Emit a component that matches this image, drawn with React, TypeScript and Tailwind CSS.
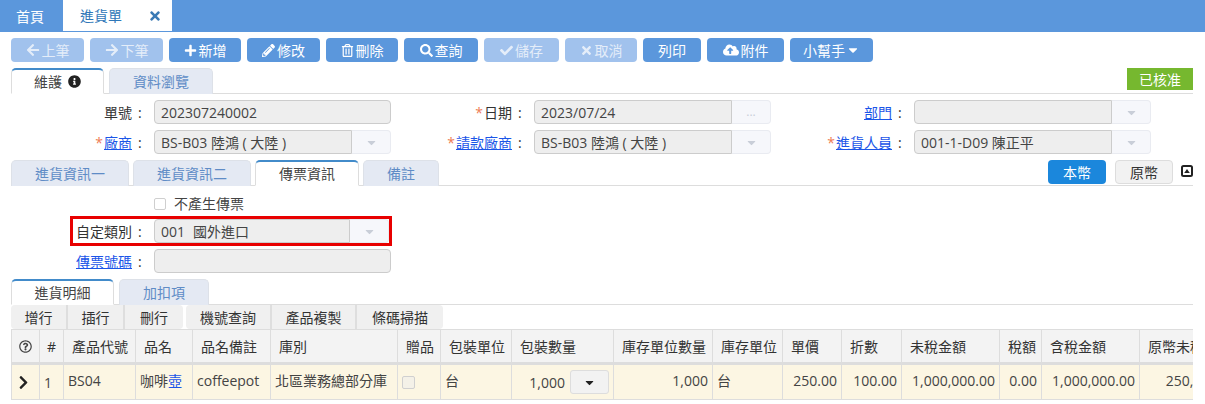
import type { ReactNode } from "react";
import {
  FaArrowLeft,
  FaArrowRight,
  FaCaretDown,
  FaCheck,
  FaChevronRight,
  FaCloudUploadAlt,
  FaInfoCircle,
  FaPencilAlt,
  FaPlus,
  FaRegQuestionCircle,
  FaRegTrashAlt,
  FaSearch,
  FaTimes,
} from "react-icons/fa";

const toolbar: { label: string; icon?: ReactNode; width: string; off?: boolean }[] = [
  { label: "上筆", icon: <FaArrowLeft size={14} />, width: "w-[73px]", off: true },
  { label: "下筆", icon: <FaArrowRight size={14} />, width: "w-[73px]", off: true },
  { label: "新增", icon: <FaPlus size={13} />, width: "w-[72px]" },
  { label: "修改", icon: <FaPencilAlt size={13} />, width: "w-[73px]" },
  { label: "刪除", icon: <FaRegTrashAlt size={13} />, width: "w-[72px]" },
  { label: "查詢", icon: <FaSearch size={13} />, width: "w-[74px]" },
  { label: "儲存", icon: <FaCheck size={13} />, width: "w-[75px]", off: true },
  { label: "取消", icon: <FaTimes size={13} />, width: "w-[72px]", off: true },
  { label: "列印", width: "w-[58px]" },
  { label: "附件", icon: <FaCloudUploadAlt size={16} />, width: "w-[77px]" },
];

const columns = [
  { label: "", width: "w-[28px]" },
  { label: "#", width: "w-[24px]" },
  { label: "產品代號", width: "w-[72px]" },
  { label: "品名", width: "w-[57px]" },
  { label: "品名備註", width: "w-[78px]" },
  { label: "庫別", width: "w-[127px]" },
  { label: "贈品", width: "w-[43px]" },
  { label: "包裝單位", width: "w-[71px]" },
  { label: "包裝數量", width: "w-[102px]" },
  { label: "庫存單位數量", width: "w-[99px]" },
  { label: "庫存單位", width: "w-[70px]" },
  { label: "單價", width: "w-[59px]" },
  { label: "折數", width: "w-[60px]" },
  { label: "未稅金額", width: "w-[98px]" },
  { label: "稅額", width: "w-[42px]" },
  { label: "含稅金額", width: "w-[98px]" },
  { label: "原幣未稅金額", width: "w-[102px]" },
];

const Label = ({
  text,
  link,
  star,
}: {
  text: string;
  link?: boolean;
  star?: boolean;
}) => (
  <div className="flex items-center justify-end text-[14px] text-[#333]">
    {star && <span className="text-[#ee7b55] mr-[1px]">*</span>}
    <span className={link ? "text-[#1a55e8] underline" : ""}>{text}</span>
    <span className="w-[22px] pl-[6px]">:</span>
  </div>
);

const Field = ({
  value,
  addon,
  width = "w-[237px]",
}: {
  value?: ReactNode;
  addon?: "select" | "dots";
  width?: string;
}) => (
  <div className={`flex h-6 shrink-0 text-[14px] text-[#444] ${width}`}>
    <div
      className={`flex-1 min-w-0 flex items-center px-[6px] bg-[#eeeeee] border border-[#cccccc] whitespace-nowrap ${
        addon ? "rounded-l-[4px]" : "rounded-[4px]"
      }`}
    >
      {value}
    </div>
    {addon && (
      <div className="w-[39px] flex items-center justify-center bg-[#f6f7fb] border border-l-0 border-[#e9ebf1] rounded-r-[4px] text-[#c9ced8] text-[12px]">
        {addon === "select" ? <FaCaretDown size={13} /> : "..."}
      </div>
    )}
  </div>
);

const Tab = ({
  text,
  width,
  active,
  children,
}: {
  text: string;
  width: string;
  active?: boolean;
  children?: ReactNode;
}) => (
  <div
    className={`${width} h-[26px] flex items-center justify-center gap-[6px] text-[14px] rounded-t-[5px] border ${
      active
        ? "bg-white text-[#444] border-[#dddddd] border-t-2 border-t-[#428bca] border-b-white -mb-px"
        : "bg-[#e4e9f3] text-[#5f8cc6] border-[#dde1e8] border-b-0 h-[25px]"
    }`}
  >
    {text}
    {children}
  </div>
);

const GridButton = ({ text, width }: { text: string; width: string }) => (
  <div
    className={`${width} h-[24px] flex items-center justify-center bg-[#f0f0f0] border-r-2 border-[#dedede] text-[14px] text-[#333] first:rounded-l-[4px] last:rounded-r-[4px] last:border-r-0`}
  >
    {text}
  </div>
);

const Cell = ({
  children,
  right,
  className = "pb-1",
}: {
  children?: ReactNode;
  right?: boolean;
  className?: string;
}) => (
  <td
    className={`border border-[#dddddd] px-1 text-[14px] text-[#444] whitespace-nowrap overflow-hidden ${
      right ? "text-right" : "text-left"
    } ${className}`}
  >
    {children}
  </td>
);

export default function App() {
  return (
    <div
      className="w-[1205px] h-[404px] overflow-hidden bg-white"
      style={{ fontFamily: '"Open Sans", "Noto Sans CJK TC", sans-serif' }}
    >
      <div className="h-8 bg-[#5b97dc] flex">
        <div className="w-[63px] flex items-center pl-4 text-[14px] text-white">首頁</div>
        <div className="w-[109px] h-[31px] bg-white flex items-center pl-[17px] text-[14px] text-[#2f77b8]">
          進貨單
          <FaTimes size={14} className="ml-[26px] text-[#3a7ab5]" />
        </div>
      </div>

      <div className="pl-[11px] pr-3">
        <div className="flex gap-[6px] pt-[6px]">
          {toolbar.map((b) => (
            <div
              key={b.label}
              className={`${b.width} h-6 rounded-[4px] flex items-center justify-center gap-[2px] text-[14px] ${
                b.off ? "bg-[#a1c2ed] text-[#e4edf9]" : "bg-[#5b97dc] text-white"
              }`}
            >
              {b.icon}
              {b.label}
            </div>
          ))}
          <div className="w-[83px] h-6 rounded-[4px] flex items-center justify-center gap-[1px] bg-[#5b97dc] text-white text-[14px]">
            小幫手
            <FaCaretDown size={14} />
          </div>
        </div>

        <div className="flex items-start gap-[5px] mt-[6px] h-[26px] border-b border-[#dddddd]">
          <Tab text="維護" width="w-[93px]" active>
            <FaInfoCircle size={13} className="text-[#222]" />
          </Tab>
          <Tab text="資料瀏覽" width="w-[104px]" />
          <div className="ml-auto w-[66px] h-[22px] bg-[#76b82f] text-white text-[14px] flex items-center justify-center">
            已核准
          </div>
        </div>

        <div className="-ml-[11px] grid grid-cols-[154px_237px_143px_237px_143px_237px] gap-y-[6px] mt-[6px]">
          <Label text="單號" />
          <Field value="202307240002" />
          <Label text="日期" star />
          <Field value="2023/07/24" addon="dots" />
          <Label text="部門" link />
          <Field addon="select" />
          <Label text="廠商" link star />
          <Field value="BS-B03 陸鴻 ( 大陸 )" addon="select" />
          <Label text="請款廠商" link star />
          <Field value="BS-B03 陸鴻 ( 大陸 )" addon="select" />
          <Label text="進貨人員" link star />
          <Field value="001-1-D09 陳正平" addon="select" />
        </div>

        <div className="flex items-start gap-1 mt-[6px] h-[26px] border-b border-[#dddddd]">
          <Tab text="進貨資訊一" width="w-[118px]" />
          <Tab text="進貨資訊二" width="w-[118px]" />
          <Tab text="傳票資訊" width="w-[104px]" active />
          <Tab text="備註" width="w-[76px]" />
          <div className="ml-auto flex items-start">
            <div className="w-[58px] h-6 rounded-[4px] bg-[#1b87dc] text-white text-[14px] flex items-center justify-center">
              本幣
            </div>
            <div className="w-[58px] h-6 ml-[9px] rounded-[4px] bg-[#f2f2f2] border border-[#dddddd] text-[#333] text-[14px] flex items-center justify-center">
              原幣
            </div>
            <svg viewBox="0 0 12 12" className="w-3 h-3 ml-2 mt-[5px]">
              <rect x="1" y="1" width="10" height="10" rx="1.5" fill="#fff" stroke="#222" strokeWidth="2" />
              <path d="M3.2 8 L6 4 L8.8 8 Z" fill="#222" />
            </svg>
          </div>
        </div>

        <div className="-ml-[11px] pl-[154px] pt-[5px] h-[30px] flex items-center gap-2 text-[14px] text-[#444]">
          <div className="w-[12px] h-[12px] rounded-[2px] border border-[#cfcfcf] bg-white" />
          不產生傳票
        </div>

        <div className="ml-[59px] w-[322px] h-[30px] border-[3px] border-[#e80000] flex items-center">
          <div className="w-[81px] shrink-0">
            <Label text="自定類別" />
          </div>
          <Field
            width="w-[235px]"
            value={
              <>
                001
                <span className="ml-[8px]">國外進口</span>
              </>
            }
            addon="select"
          />
        </div>

        <div className="-ml-[11px] grid grid-cols-[154px_237px] mt-[3px]">
          <Label text="傳票號碼" link />
          <Field />
        </div>

        <div className="flex items-start gap-[5px] mt-[6px] h-[26px] border-b border-[#dddddd]">
          <Tab text="進貨明細" width="w-[103px]" active />
          <Tab text="加扣項" width="w-[90px]" />
        </div>

        <div className="flex gap-[3px]">
          <div className="flex">
            <GridButton text="增行" width="w-[57px]" />
            <GridButton text="插行" width="w-[57px]" />
            <GridButton text="刪行" width="w-[58px]" />
          </div>
          <div className="flex">
            <GridButton text="機號查詢" width="w-[86px]" />
            <GridButton text="產品複製" width="w-[85px]" />
            <GridButton text="條碼掃描" width="w-[86px]" />
          </div>
        </div>

        <div className="overflow-hidden w-[1182px]">
          <table className="table-fixed w-[1230px] border-collapse">
            <colgroup>
              {columns.map((c, i) => (
                <col key={i} className={c.width} />
              ))}
            </colgroup>
            <thead>
              <tr className="h-[34px] bg-[#f3f3f3]">
                {columns.map((c, i) => (
                  <th
                    key={i}
                    className={`border border-b-[3px] border-[#dddddd] px-1 text-[14px] font-normal text-[#333] whitespace-nowrap overflow-hidden ${
                      i === 0 || i === 1 ? "text-center" : "text-left pl-[8px]"
                    }`}
                  >
                    {i === 0 ? (
                      <FaRegQuestionCircle size={13} className="mx-auto text-[#444]" />
                    ) : (
                      c.label
                    )}
                  </th>
                ))}
              </tr>
            </thead>
            <tbody>
              <tr className="h-[36px] bg-[#fcf6e3]">
                <Cell className="pb-0">
                  <FaChevronRight size={15} className="text-[#222]" />
                </Cell>
                <Cell className="pb-0 text-center">1</Cell>
                <Cell>BS04</Cell>
                <Cell className="pb-1 text-[#7a3fd0]">
                  咖啡<span className="text-[#1a55e8]">壺</span>
                </Cell>
                <Cell>coffeepot</Cell>
                <Cell>北區業務總部分庫</Cell>
                <Cell className="pb-0">
                  <div className="w-[13px] h-[13px] rounded-[2px] border border-[#d0d0d0] bg-[#f4f1e8]" />
                </Cell>
                <Cell>台</Cell>
                <Cell right className="pb-0">
                  <div className="flex items-center justify-end gap-[5px]">
                    1,000
                    <div className="w-[39px] h-6 rounded-[3px] bg-[#f2f2f2] border border-[#dddddd] flex items-center justify-center text-[#222]">
                      <FaCaretDown size={13} />
                    </div>
                  </div>
                </Cell>
                <Cell right>1,000</Cell>
                <Cell>台</Cell>
                <Cell right>250.00</Cell>
                <Cell right>100.00</Cell>
                <Cell right>1,000,000.00</Cell>
                <Cell right>0.00</Cell>
                <Cell right>1,000,000.00</Cell>
                <Cell right>250,000.00</Cell>
              </tr>
            </tbody>
          </table>
        </div>
      </div>
    </div>
  );
}
